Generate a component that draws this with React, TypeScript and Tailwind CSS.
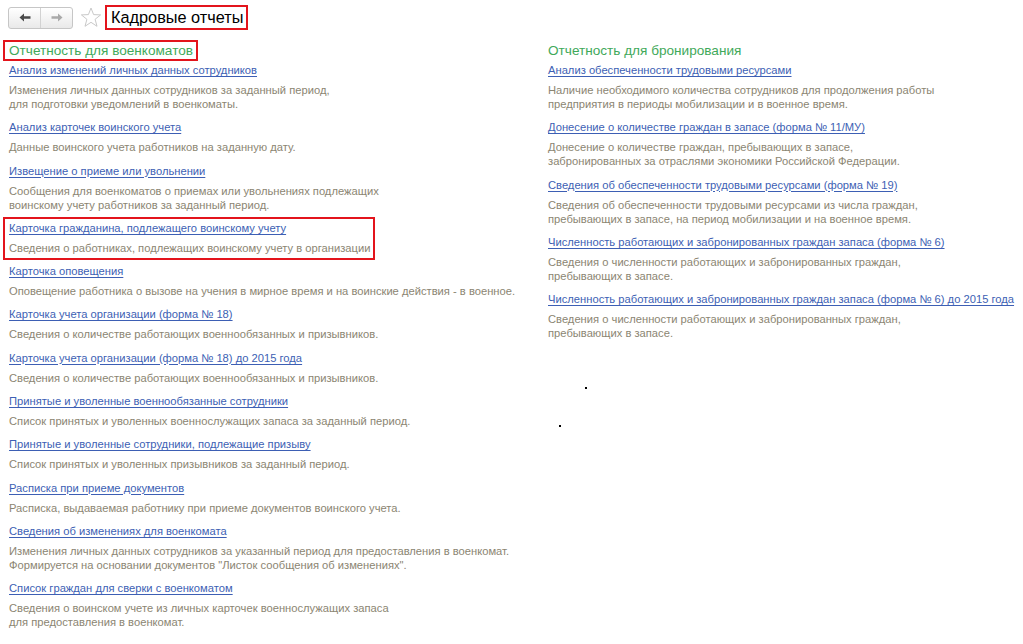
import React from "react";

type Report = { title: string; lines: string[]; marked?: boolean };

const military: Report[] = [
  {
    title: "Анализ изменений личных данных сотрудников",
    lines: [
      "Изменения личных данных сотрудников за заданный период,",
      "для подготовки уведомлений в военкоматы.",
    ],
  },
  { title: "Анализ карточек воинского учета", lines: ["Данные воинского учета работников на заданную дату."] },
  {
    title: "Извещение о приеме или увольнении",
    lines: [
      "Сообщения для военкоматов о приемах или увольнениях подлежащих",
      "воинскому учету работников за заданный период.",
    ],
  },
  {
    title: "Карточка гражданина, подлежащего воинскому учету",
    lines: ["Сведения о работниках, подлежащих воинскому учету в организации"],
    marked: true,
  },
  {
    title: "Карточка оповещения",
    lines: ["Оповещение работника о вызове на учения в мирное время и на воинские действия - в военное."],
  },
  {
    title: "Карточка учета организации (форма № 18)",
    lines: ["Сведения о количестве работающих военнообязанных и призывников."],
  },
  {
    title: "Карточка учета организации (форма № 18) до 2015 года",
    lines: ["Сведения о количестве работающих военнообязанных и призывников."],
  },
  {
    title: "Принятые и уволенные военнообязанные сотрудники",
    lines: ["Список принятых и уволенных военнослужащих запаса за заданный период."],
  },
  {
    title: "Принятые и уволенные сотрудники, подлежащие призыву",
    lines: ["Список принятых и уволенных призывников за заданный период."],
  },
  {
    title: "Расписка при приеме документов",
    lines: ["Расписка, выдаваемая работнику при приеме документов воинского учета."],
  },
  {
    title: "Сведения об изменениях для военкомата",
    lines: [
      "Изменения личных данных сотрудников за указанный период для предоставления в военкомат.",
      "Формируется на основании документов \"Листок сообщения об изменениях\".",
    ],
  },
  {
    title: "Список граждан для сверки с военкоматом",
    lines: [
      "Сведения о воинском учете из личных карточек военнослужащих запаса",
      "для предоставления в военкомат.",
    ],
  },
];

const reservation: Report[] = [
  {
    title: "Анализ обеспеченности трудовыми ресурсами",
    lines: [
      "Наличие необходимого количества сотрудников для продолжения работы",
      "предприятия в периоды мобилизации и в военное время.",
    ],
  },
  {
    title: "Донесение о количестве граждан в запасе (форма № 11/МУ)",
    lines: [
      "Донесение о количестве граждан, пребывающих в запасе,",
      "забронированных за отраслями экономики Российской Федерации.",
    ],
  },
  {
    title: "Сведения об обеспеченности трудовыми ресурсами (форма № 19)",
    lines: [
      "Сведения об обеспеченности трудовыми ресурсами из числа граждан,",
      "пребывающих в запасе, на период мобилизации и на военное время.",
    ],
  },
  {
    title: "Численность работающих и забронированных граждан запаса (форма № 6)",
    lines: ["Сведения о численности работающих и забронированных граждан,", "пребывающих в запасе."],
  },
  {
    title: "Численность работающих и забронированных граждан запаса (форма № 6) до 2015 года",
    lines: ["Сведения о численности работающих и забронированных граждан,", "пребывающих в запасе."],
  },
];

function ArrowLeft() {
  return (
    <svg width="12" height="9" viewBox="0 0 12 9">
      <path d="M0.5 4.5 L5 0.5 L5 3.2 L11.5 3.2 L11.5 5.8 L5 5.8 L5 8.5 Z" fill="#4a4a4a" />
    </svg>
  );
}

function ArrowRight() {
  return (
    <svg width="12" height="9" viewBox="0 0 12 9">
      <path d="M11.5 4.5 L7 0.5 L7 3.2 L0.5 3.2 L0.5 5.8 L7 5.8 L7 8.5 Z" fill="#a9a9a9" />
    </svg>
  );
}

function Star() {
  return (
    <svg width="22" height="21" viewBox="0 0 22 21">
      <path
        d="M11 1 L13.6 7.6 L20.6 7.9 L15.1 12.3 L17 19.3 L11 15.3 L5 19.3 L6.9 12.3 L1.4 7.9 L8.4 7.6 Z"
        fill="none"
        stroke="#c9c9c9"
        strokeWidth="1"
        strokeLinejoin="round"
      />
    </svg>
  );
}

function ReportItem({ r }: { r: Report }) {
  const body = (
    <>
      <a
        href="#"
        className="block whitespace-nowrap text-[11.2px] leading-[16px] text-[#3d5fb4] underline decoration-[#3d5fb4] underline-offset-[2px]"
      >
        {r.title}
      </a>
      <div className="mt-[5px] whitespace-nowrap text-[11.2px] leading-[14px] text-[#8b8572]">
        {r.lines.map((l, i) => (
          <div key={i}>{l}</div>
        ))}
      </div>
    </>
  );
  if (r.marked) {
    return (
      <div className="-mb-[5px] -ml-[6px] -mt-[3px] w-[372px] border-2 border-[#e3141c] pb-[3px] pl-[4px] pt-[1px]">
        {body}
      </div>
    );
  }
  return <div>{body}</div>;
}

function Section({ heading, items, boxed }: { heading: string; items: Report[]; boxed?: boolean }) {
  return (
    <div className="flex flex-col">
      <div
        className={
          boxed
            ? "-ml-[6px] self-start border-2 border-[#e3141c] pl-[4px] pr-[3px] text-[13.6px] leading-[17px] text-[#3fa95a]"
            : "-ml-[2px] self-start border-2 border-transparent text-[13.6px] leading-[17px] text-[#3fa95a]"
        }
      >
        {heading}
      </div>
      <div className="mt-[1px] flex flex-col gap-[8.3px]">
        {items.map((r) => (
          <ReportItem key={r.title} r={r} />
        ))}
      </div>
    </div>
  );
}

export default function App() {
  return (
    <div
      className="relative h-[644px] w-[1023px] overflow-hidden bg-white text-black"
      style={{ fontFamily: '"Liberation Sans", Arial, sans-serif' }}
    >
      {/* toolbar: history buttons, favourite star, form title */}
      <div className="flex items-center pl-[8px] pt-[5px]">
        <div className="flex h-[22px] w-[65px] overflow-hidden rounded-[3px] border border-[#c6c6c6] bg-gradient-to-b from-white to-[#e9e9e9]">
          <div className="flex w-[32px] items-center justify-center border-r border-[#d2d2d2]">
            <ArrowLeft />
          </div>
          <div className="flex flex-1 items-center justify-center">
            <ArrowRight />
          </div>
        </div>
        <div className="ml-[7px] flex items-center">
          <Star />
        </div>
        <div className="ml-[3px] flex h-[25px] items-center border-2 border-[#e3141c] pl-[4px] pr-[3px] text-[16.3px] leading-[21px]">
          Кадровые отчеты
        </div>
      </div>

      {/* two report groups */}
      <div className="mt-[10px] flex pl-[9px]">
        <div className="w-[539px] shrink-0">
          <Section heading="Отчетность для военкоматов" items={military} boxed />
        </div>
        <div className="flex-1">
          <Section heading="Отчетность для бронирования" items={reservation} />
        </div>
      </div>

      <span className="absolute left-[585px] top-[387px] h-[2px] w-[2px] bg-black" />
      <span className="absolute left-[559px] top-[425px] h-[2px] w-[2px] bg-black" />
    </div>
  );
}
